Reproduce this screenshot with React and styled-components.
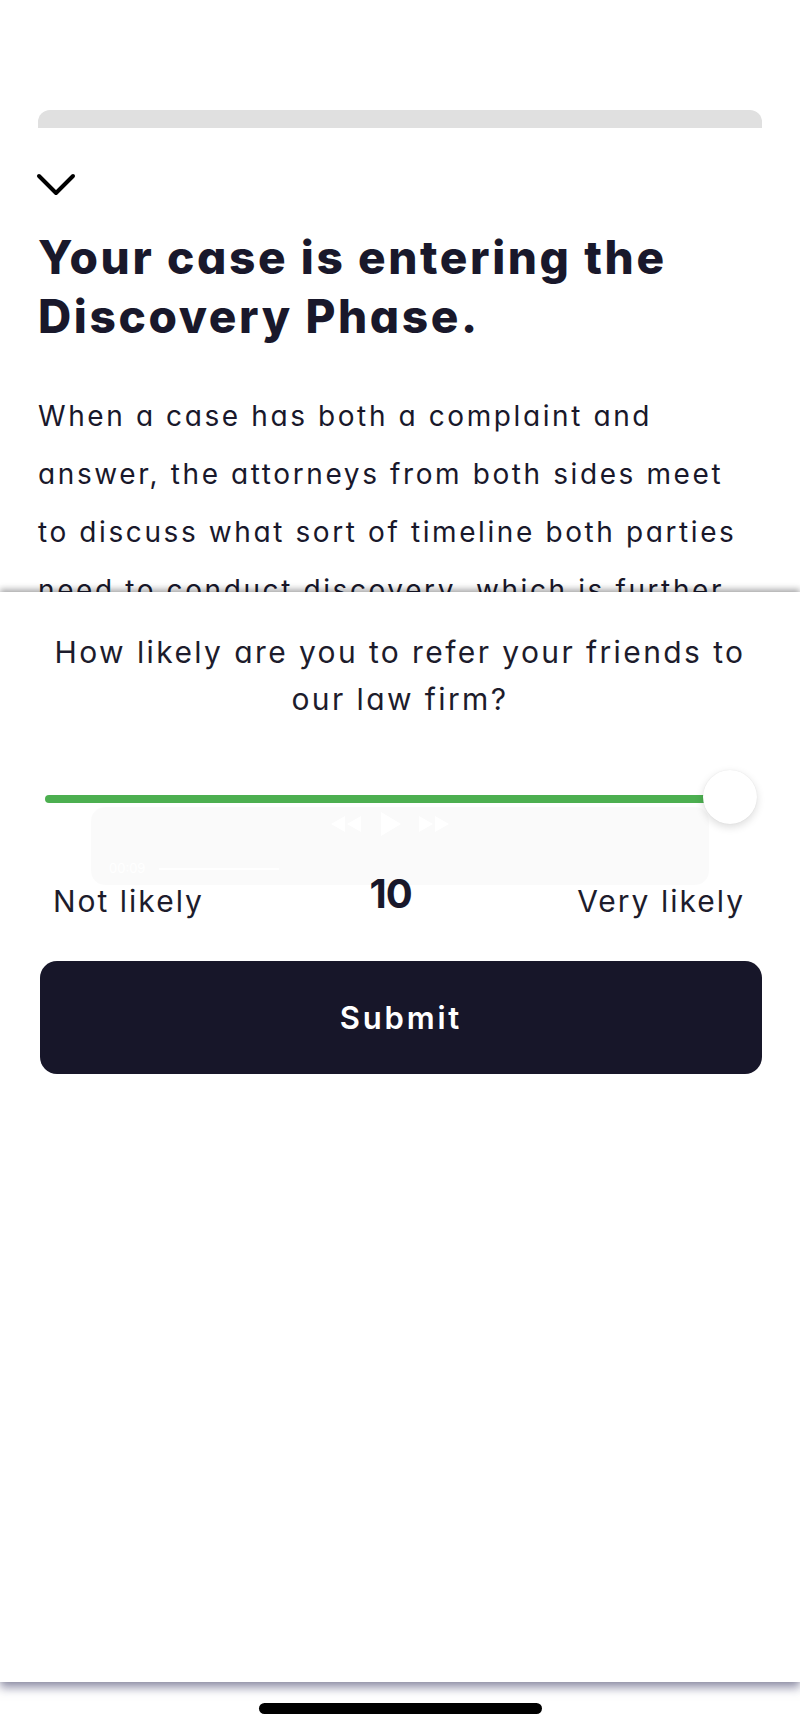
import React from 'react';
import styled, { createGlobalStyle } from 'styled-components';

const GlobalStyle = createGlobalStyle`
  html, body { margin: 0; padding: 0; background: #fff; }
  body {
    font-family: Inter, "Noto Sans", sans-serif;
    font-feature-settings: "cv11" 1;
    -webkit-font-smoothing: antialiased;
    color: #19182b;
  }
  * { box-sizing: border-box; }
`;

const Page = styled.div`
  width: 800px;
  height: 1733px;
  display: flex;
  flex-direction: column;
  background: #fff;
  overflow: hidden;
`;

const Article = styled.section`
  flex: none;
  height: 592px;
  overflow: hidden;
  padding: 110px 38px 0;
`;

const Handle = styled.div`
  height: 18px;
  background: #e0e0e0;
  border-radius: 12px 12px 0 0;
`;

const CollapseButton = styled.button`
  display: block;
  margin: 45px 0 0 -2px;
  padding: 0;
  border: 0;
  background: none;
  width: 40px;
  height: 24px;
  svg { display: block; }
`;

const Title = styled.h1`
  margin: 31px 0 0;
  font-size: 46px;
  line-height: 59px;
  font-weight: 800;
  letter-spacing: 2.6px;
  color: #19182b;
`;

const Body = styled.p`
  margin: 41px 0 0;
  font-size: 28px;
  line-height: 58px;
  font-weight: 400;
  letter-spacing: 2.6px;
  color: #19182b;
`;

const Sheet = styled.section`
  position: relative;
  z-index: 1;
  flex: 1;
  background: #fff;
  padding: 37px 38px 0;
  box-shadow: 0 -3px 6px rgba(0, 0, 0, 0.3), 0 6px 9px rgba(70, 70, 110, 0.55);
`;

const Question = styled.h2`
  margin: 0;
  font-size: 30px;
  line-height: 47px;
  font-weight: 400;
  letter-spacing: 2.4px;
  text-align: center;
  color: #1d1c2c;
`;

const Slider = styled.div`
  position: relative;
  z-index: 1;
  margin: 47px 5px 0 7px;
  height: 54px;
  display: flex;
  align-items: center;
`;

const Fill = styled.div`
  height: 8px;
  margin-top: 4px;
  border-radius: 4px;
  background: #4caf50;
`;

const Thumb = styled.div`
  position: absolute;
  top: 0;
  width: 54px;
  height: 54px;
  border-radius: 50%;
  background: #fff;
  box-shadow: 0 3px 9px rgba(0, 0, 0, 0.14), 0 0 1px rgba(0, 0, 0, 0.1);
`;

const Ghost = styled.div`
  position: absolute;
  left: 91px;
  top: 215px;
  width: 618px;
  height: 78px;
  border-radius: 14px;
  background: rgba(0, 0, 0, 0.018);
  pointer-events: none;
  display: flex;
  flex-direction: column;
  justify-content: space-between;
  padding: 4px 18px 10px;
`;

const GhostControls = styled.div`
  display: flex;
  align-items: center;
  justify-content: center;
  gap: 14px;
  margin-right: 20px;
  svg { display: block; }
`;

const GhostTimeline = styled.div`
  display: flex;
  align-items: center;
  gap: 14px;
  font: 13px/1 Inter, sans-serif;
  color: #fff;
`;

const GhostLine = styled.div`
  width: 120px;
  height: 2px;
  background: #fff;
`;

const Labels = styled.div`
  margin: 48px 17px 0 15px;
  display: flex;
  justify-content: space-between;
  align-items: flex-end;
`;

const Label = styled.span`
  font-size: 30px;
  line-height: 40px;
  letter-spacing: 2px;
  color: #1d1c2c;
`;

const Value = styled.span`
  font-size: 40px;
  line-height: 44px;
  font-weight: 700;
  letter-spacing: -1px;
  margin-bottom: 5px;
  color: #19182b;
`;

const SubmitButton = styled.button`
  display: flex;
  align-items: center;
  justify-content: center;
  width: calc(100% - 2px);
  margin: 40px 0 0 2px;
  height: 113px;
  border: 0;
  border-radius: 17px;
  background: #171629;
  color: #fff;
  font-family: inherit;
  font-feature-settings: inherit;
  font-size: 31px;
  font-weight: 600;
  letter-spacing: 2.8px;
`;

const HomeArea = styled.div`
  flex: none;
  height: 51px;
  display: flex;
  justify-content: center;
  padding-top: 21px;
  background: #fff;
`;

const HomeIndicator = styled.div`
  width: 283px;
  height: 11px;
  border-radius: 6px;
  background: #000;
`;

function Chevron() {
  return (
    <svg width="40" height="24" viewBox="0 0 40 24" fill="none">
      <polyline points="3,3 20,20 37,3" stroke="#000" strokeWidth="4" strokeLinecap="round" strokeLinejoin="round" />
    </svg>
  );
}

function GhostPlayer() {
  return (
    <Ghost aria-hidden="true">
      <GhostControls>
        <svg width="36" height="20" viewBox="0 0 36 20" fill="#fff">
          <path d="M17 2 L3 10 L17 18 Z M33 2 L19 10 L33 18 Z" />
        </svg>
        <svg width="24" height="26" viewBox="0 0 24 26" fill="#fff">
          <path d="M3 1 L23 13 L3 25 Z" />
        </svg>
        <svg width="36" height="20" viewBox="0 0 36 20" fill="#fff">
          <path d="M3 2 L17 10 L3 18 Z M19 2 L33 10 L19 18 Z" />
        </svg>
      </GhostControls>
      <GhostTimeline>
        <span>00:09</span>
        <GhostLine />
      </GhostTimeline>
    </Ghost>
  );
}

function RatingSlider({ value, max }) {
  const frac = value / max;
  return (
    <Slider>
      <Fill style={{ width: `calc((100% - 54px) * ${frac} + 27px)` }} />
      <Thumb style={{ left: `calc((100% - 54px) * ${frac})` }} />
    </Slider>
  );
}

export default function App() {
  const value = 10;
  return (
    <>
      <GlobalStyle />
      <Page>
        <Article>
          <Handle />
          <CollapseButton aria-label="Collapse">
            <Chevron />
          </CollapseButton>
          <Title>Your case is entering the Discovery Phase.</Title>
          <Body>
            When a case has both a complaint and answer, the attorneys from both sides meet to discuss what sort of
            timeline both parties need to conduct discovery, which is further explained below.
          </Body>
        </Article>
        <Sheet>
          <Question>How likely are you to refer your friends to our law firm?</Question>
          <RatingSlider value={value} max={10} />
          <GhostPlayer />
          <Labels>
            <Label>Not likely</Label>
            <Value>{value}</Value>
            <Label>Very likely</Label>
          </Labels>
          <SubmitButton>Submit</SubmitButton>
        </Sheet>
        <HomeArea>
          <HomeIndicator />
        </HomeArea>
      </Page>
    </>
  );
}
